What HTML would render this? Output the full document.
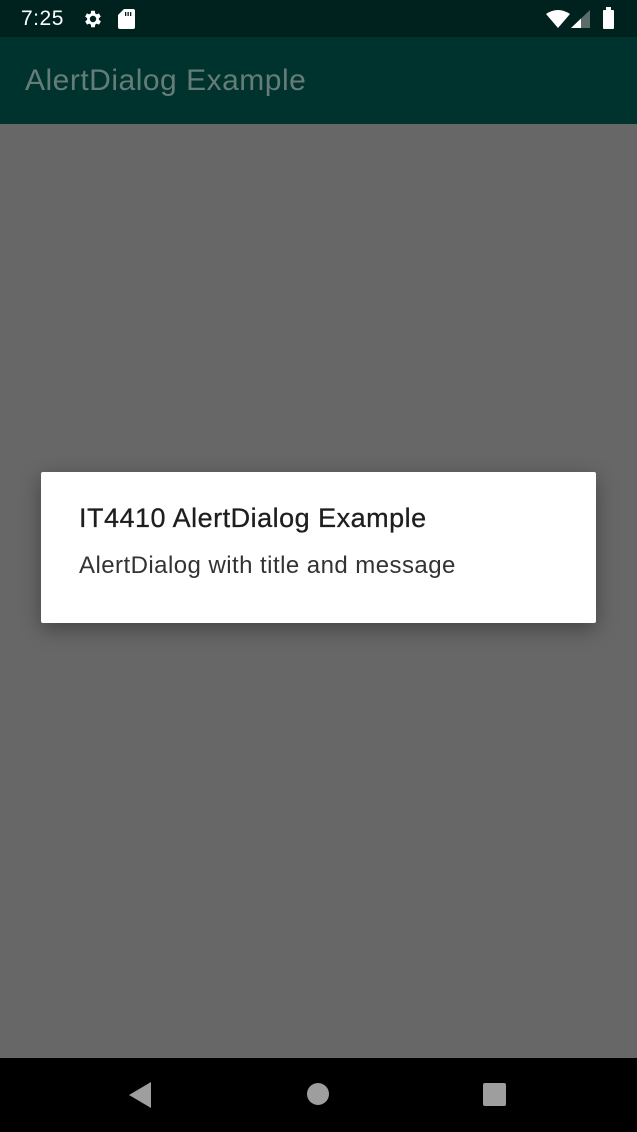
<!DOCTYPE html>
<html><head><style>
body{margin:0;width:637px;height:1132px;background:#676767;font-family:"Liberation Sans",sans-serif;position:relative;overflow:hidden}
.sb{position:absolute;top:0;left:0;width:637px;height:37px;background:#00221f}
.ab{position:absolute;top:37px;left:0;width:637px;height:87px;background:#00332e}
.nav{position:absolute;top:1058px;left:0;width:637px;height:74px;background:#000}
.dlg{position:absolute;left:41px;top:472px;width:555px;height:151px;background:#fff;border-radius:2px;box-shadow:0 6px 20px rgba(0,0,0,.35)}
</style></head><body>
<div class="sb">
<div style="position:absolute;left:21px;top:7px;color:#fff;font-size:21px;letter-spacing:0.5px">7:25</div>
<svg style="position:absolute;left:82px;top:8px" width="22" height="22" viewBox="0 0 24 24"><path fill="#fff" d="M19.4 13a7.5 7.5 0 0 0 0-2l2.1-1.6-2-3.5-2.5 1a7 7 0 0 0-1.7-1L15 3h-4l-.4 2.9a7 7 0 0 0-1.7 1l-2.5-1-2 3.5L6.6 11a7.5 7.5 0 0 0 0 2l-2.1 1.6 2 3.5 2.5-1a7 7 0 0 0 1.7 1L11 21h4l.4-2.9a7 7 0 0 0 1.7-1l2.5 1 2-3.5zM13 15.5a3.5 3.5 0 1 1 0-7 3.5 3.5 0 0 1 0 7z" transform="translate(-1 0)"/></svg>
<svg style="position:absolute;left:118px;top:9px" width="17" height="20" viewBox="0 0 17 20"><path fill="#fff" d="M6 0h9a2 2 0 0 1 2 2v16a2 2 0 0 1-2 2H2a2 2 0 0 1-2-2V6z"/><path fill="#00221f" d="M7 3h1.3v4H7zM9.5 3h1.3v4H9.5zM12 3h1.3v4H12z"/></svg>
<svg style="position:absolute;left:546px;top:10px" width="24" height="18" viewBox="0 0 24 18"><path fill="#fff" d="M0 4Q12-4 24 4L12 18z"/></svg>
<svg style="position:absolute;left:571px;top:10px" width="19" height="18" viewBox="0 0 19 18"><path style="fill:#5a6b68" d="M0 18L19 0v18z"/><path fill="#fff" d="M0 18L10 8.5V18z"/></svg>
<div style="position:absolute;left:603px;top:10px;width:11px;height:19px;background:#fff;border-radius:1px"></div>
<div style="position:absolute;left:606px;top:7px;width:5px;height:3px;background:#fff"></div>
</div>
<div class="ab"><div style="position:absolute;left:25px;top:27px;color:#667c79;font-size:30px;letter-spacing:0.5px">AlertDialog Example</div></div>
<div class="dlg">
<div style="position:absolute;left:38px;top:31px;font-size:27px;color:#1e1e1e;letter-spacing:0.5px;-webkit-text-stroke:0.3px #1e1e1e">IT4410 AlertDialog Example</div>
<div style="position:absolute;left:38px;top:80px;font-size:24px;color:#333;letter-spacing:0.45px">AlertDialog with title and message</div>
</div>
<div class="nav">
<svg style="position:absolute;left:129px;top:24px" width="23" height="26"><path fill="#9e9e9e" d="M0 13L22 0v26z"/></svg>
<div style="position:absolute;left:307px;top:25px;width:22px;height:22px;border-radius:50%;background:#9e9e9e"></div>
<div style="position:absolute;left:483px;top:25px;width:23px;height:23px;border-radius:2px;background:#9e9e9e"></div>
</div>
</body></html>
